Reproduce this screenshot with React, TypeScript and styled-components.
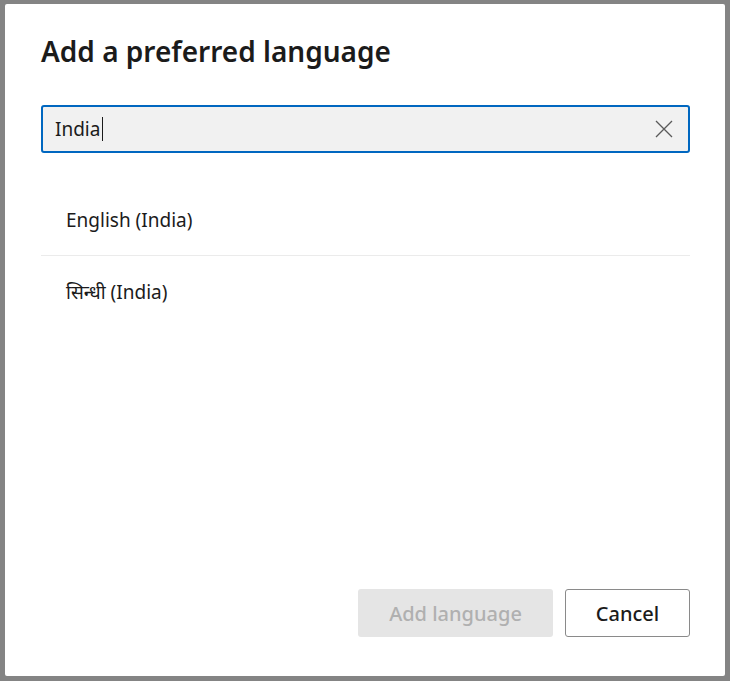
import styled, { createGlobalStyle } from 'styled-components';

const GlobalStyle = createGlobalStyle`
  html, body {
    margin: 0;
    padding: 0;
    background: #848484;
    font-family: 'Noto Sans', 'Open Sans', sans-serif;
  }
  * { box-sizing: border-box; }
`;

function ClearIcon(): JSX.Element {
  return (
    <svg width="20" height="20" viewBox="0 0 20 20" fill="none">
      <path d="M2 2 L18 18 M18 2 L2 18" stroke="#5a5a5a" strokeWidth="1.3" />
    </svg>
  );
}

const languages = ['English (India)', 'सिन्धी (India)'];

function App(): JSX.Element {
  return (
    <>
      <GlobalStyle />
      <Backdrop>
        <Dialog>
          <Title>Add a preferred language</Title>
          <SearchBox>
            <SearchText>India</SearchText>
            <Caret />
            <ClearButton>
              <ClearIcon />
            </ClearButton>
          </SearchBox>
          <List>
            {languages.map((lang, i) => (
              <Item key={lang} $last={i === languages.length - 1}>
                {lang}
              </Item>
            ))}
          </List>
          <Footer>
            <PrimaryButton disabled>Add language</PrimaryButton>
            <SecondaryButton>Cancel</SecondaryButton>
          </Footer>
        </Dialog>
      </Backdrop>
    </>
  );
}

export default App;

const Backdrop = styled.div`
  width: 730px;
  height: 681px;
  padding: 4px 5px 5px 5px;
`;

const Dialog = styled.div`
  width: 720px;
  height: 672px;
  background: #ffffff;
  border-radius: 2px;
  display: flex;
  flex-direction: column;
  padding: 0 35px 39px 36px;
`;

const Title = styled.h1`
  margin: 28px 0 0 0;
  font-size: 28px;
  font-weight: 600;
  color: #1b1b1b;
  line-height: 38px;
`;

const SearchBox = styled.div`
  margin-top: 35px;
  height: 48px;
  display: flex;
  align-items: center;
  background: #f1f1f1;
  border: 2px solid #0067c0;
  border-radius: 3px;
  padding: 0 14px 0 12px;
`;

const SearchText = styled.span`
  font-size: 19px;
  color: #1b1b1b;
`;

const Caret = styled.span`
  width: 1px;
  height: 24px;
  background: #1b1b1b;
  margin-left: 2px;
`;

const ClearButton = styled.span`
  margin-left: auto;
  display: flex;
  align-items: center;
`;

const List = styled.div`
  margin-top: 31px;
  display: flex;
  flex-direction: column;
  flex: 1;
`;

const Item = styled.div<{ $last: boolean }>`
  height: 72px;
  display: flex;
  align-items: center;
  padding-left: 25px;
  font-size: 19px;
  color: #1b1b1b;
  border-bottom: ${({ $last }) => ($last ? 'none' : '1px solid #ebebeb')};
`;

const Footer = styled.div`
  display: flex;
  justify-content: flex-end;
  gap: 12px;
`;

const PrimaryButton = styled.button`
  width: 195px;
  height: 48px;
  border: none;
  border-radius: 3px;
  background: #e5e5e5;
  color: #b0b0b0;
  font-family: inherit;
  font-size: 20px;
  font-weight: 500;
`;

const SecondaryButton = styled.button`
  width: 125px;
  height: 48px;
  border: 1px solid #8a8a8a;
  border-radius: 3px;
  background: #ffffff;
  color: #1b1b1b;
  font-family: inherit;
  font-size: 20px;
  font-weight: 500;
`;
